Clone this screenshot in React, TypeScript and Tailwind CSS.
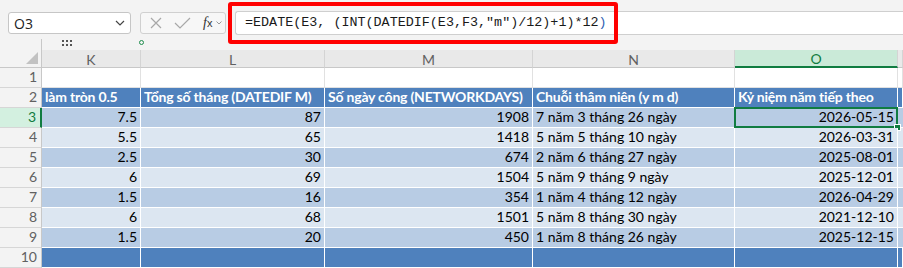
import React from "react";

const rows = [
  ["7.5", "87", "1908", "7 năm 3 tháng 26 ngày", "2026-05-15"],
  ["5.5", "65", "1418", "5 năm 5 tháng 10 ngày", "2026-03-31"],
  ["2.5", "30", "674", "2 năm 6 tháng 27 ngày", "2025-08-01"],
  ["6", "69", "1504", "5 năm 9 tháng 9 ngày", "2025-12-01"],
  ["1.5", "16", "354", "1 năm 4 tháng 12 ngày", "2026-04-29"],
  ["6", "68", "1501", "5 năm 8 tháng 30 ngày", "2021-12-10"],
  ["1.5", "20", "450", "1 năm 8 tháng 26 ngày", "2025-12-15"],
];

const headers = [
  "làm tròn 0.5",
  "Tổng số tháng (DATEDIF M)",
  "Số ngày công (NETWORKDAYS)",
  "Chuỗi thâm niên (y m d)",
  "Kỷ niệm năm tiếp theo",
  "",
];

const cols = ["K", "L", "M", "N", "O", ""];

const cellFont = { fontFamily: "Lato, 'Liberation Sans', sans-serif" };

function RowHeader({ n, active }: { n: number; active?: boolean }) {
  return (
    <div
      className={
        "h-[20px] flex items-end justify-end pr-[4px] pb-[1px] text-[14px] leading-[18px] border-b border-[#d6d6d6] " +
        (active
          ? "bg-[#d3f0e0] text-[#107c41] border-r-2 border-r-[#107c41]"
          : "bg-[#f3f3f3] text-[#616161] border-r border-r-[#c8c8c8]")
      }
    >
      {n}
    </div>
  );
}

export default function App() {
  return (
    <div
      className="w-[903px] h-[268px] bg-[#f3f3f3] overflow-hidden relative"
      style={cellFont}
    >
      {/* formula bar area */}
      <div className="h-[50px] relative">
        <div className="flex items-start pt-[12px]">
          {/* name box */}
          <div className="ml-[8px] w-[123px] h-[22px] bg-white border border-[#c6c6c6] rounded-[3px] flex items-center justify-between pl-[5px] pr-[5px]">
            <span className="text-[14px] text-[#222]" style={{ fontFamily: "'Open Sans', sans-serif" }}>
              O3
            </span>
            <svg width="10" height="6" viewBox="0 0 10 6">
              <path d="M1 1 L5 5 L9 1" fill="none" stroke="#444" strokeWidth="1.2" />
            </svg>
          </div>
          {/* icons box */}
          <div className="ml-[9px] w-[86px] h-[22px] bg-[#f7f7f7] border border-[#d0d0d0] rounded-[3px] flex items-center pl-[9px]">
            <svg width="12" height="12" viewBox="0 0 12 12">
              <path d="M1 1 L11 11 M11 1 L1 11" stroke="#a8a8a8" strokeWidth="1.2" />
            </svg>
            <svg width="17" height="12" viewBox="0 0 17 12" className="ml-[12px]">
              <path d="M1 6 L6 11 L16 1" fill="none" stroke="#a8a8a8" strokeWidth="1.2" />
            </svg>
            <span
              className="ml-[12px] text-[14px] text-[#333] italic leading-none"
              style={{ fontFamily: "'Liberation Serif', serif" }}
            >
              f<span className="text-[11px] not-italic" style={{ fontFamily: "'Liberation Sans', sans-serif" }}>x</span>
            </span>
            <svg width="6" height="4" viewBox="0 0 6 4" className="ml-[4px]">
              <path d="M0.5 0.5 L3 3 L5.5 0.5" fill="none" stroke="#999" strokeWidth="1" />
            </svg>
          </div>
          {/* formula input */}
          <div className="ml-[9px] mt-[-1px] flex-1 h-[24px] bg-white border-y border-l border-[#cfcfcf] rounded-l-[3px] flex items-center pl-[9px]">
            <span
              className="text-[13.4px] text-[#1a1a1a] whitespace-pre"
              style={{ fontFamily: "'Liberation Mono', monospace" }}
            >
              =EDATE(E3, (INT(DATEDIF(E3,F3,"m")/12)+1)*12<span className="text-[#2f5fb3]">)</span>
            </span>
          </div>
        </div>
        {/* dots */}
        <div className="absolute left-[62px] top-[40px] grid grid-cols-3 gap-x-[2px] gap-y-[2px]">
          {Array.from({ length: 6 }).map((_, i) => (
            <div key={i} className="w-[2px] h-[2px] bg-[#555]" />
          ))}
        </div>
        {/* green circle */}
        <div className="absolute left-[139px] top-[40px] w-[5px] h-[5px] rounded-full border border-[#1e8c4c]" />
        {/* row header separator line */}
        <div className="absolute left-[41px] top-[39px] w-[1px] h-[11px] bg-[#c8c8c8]" />
        {/* red annotation */}
        <div className="absolute left-[228px] top-[2px] w-[390px] h-[42px] border-[4px] border-[#ff0000] rounded-[3px]" />
      </div>

      {/* grid */}
      <div className="grid grid-cols-[42px_99px_184px_208px_202px_163px_1fr] text-[14px]">
        {/* column headers */}
        <div className="h-[18px] bg-[#f3f3f3] border-r border-[#c8c8c8] border-b border-b-[#c8c8c8] relative">
          <svg width="12" height="12" viewBox="0 0 12 12" className="absolute right-[3px] bottom-[3px]">
            <path d="M12 0 L12 12 L0 12 Z" fill="#c2c2c2" />
          </svg>
        </div>
        {cols.map((c, i) => (
          <div
            key={i}
            className={
              "h-[18px] flex items-center justify-center leading-none text-[14px] pt-[2px] border-r border-[#d4d4d4] " +
              (c === "O"
                ? "bg-[#caead8] text-[#107c41] border-b-2 border-b-[#107c41]"
                : "bg-[#e9e9e9] text-[#616161] border-b border-b-[#c8c8c8]")
            }
          >
            {c}
          </div>
        ))}

        {/* row 1 */}
        <RowHeader n={1} />
        {cols.map((_, i) => (
          <div key={i} className="h-[20px] bg-white border-r border-b border-[#e1e1e1]" />
        ))}

        {/* row 2 headers */}
        <RowHeader n={2} />
        {headers.map((h, i) => (
          <div
            key={i}
            className="h-[20px] bg-[#4f81bd] border-r border-b border-white text-white font-bold flex items-end pb-[1px] pl-[3px] leading-[18px] whitespace-nowrap overflow-hidden tracking-[-0.2px]"
          >
            {h}
          </div>
        ))}

        {/* data rows */}
        {rows.map((r, ri) => {
          const bg = ri % 2 === 0 ? "bg-[#b8cce4]" : "bg-[#dce6f1]";
          return (
            <React.Fragment key={ri}>
              <RowHeader n={ri + 3} active={ri === 0} />
              {r.map((v, ci) => (
                <div
                  key={ci}
                  className={
                    "h-[20px] border-r border-b border-white text-black flex items-end pb-[1px] leading-[18px] whitespace-nowrap relative " +
                    bg +
                    (ci === 3 ? " justify-start pl-[3px]" : " justify-end pr-[3px]")
                  }
                >
                  {v}
                  {ri === 0 && ci === 4 && (
                    <>
                      <div className="absolute left-[-1px] top-[-1px] right-[-1px] bottom-[-1px] border-2 border-[#107c41]" />
                      <div className="absolute right-[-4px] bottom-[-4px] w-[7px] h-[7px] bg-[#107c41] border border-white" />
                    </>
                  )}
                </div>
              ))}
              <div className={"h-[20px] border-b border-white " + bg} />
            </React.Fragment>
          );
        })}

        {/* row 10 */}
        <RowHeader n={10} />
        {cols.map((_, i) => (
          <div key={i} className="h-[20px] bg-[#4f81bd] border-r border-b border-white" />
        ))}
      </div>
    </div>
  );
}
